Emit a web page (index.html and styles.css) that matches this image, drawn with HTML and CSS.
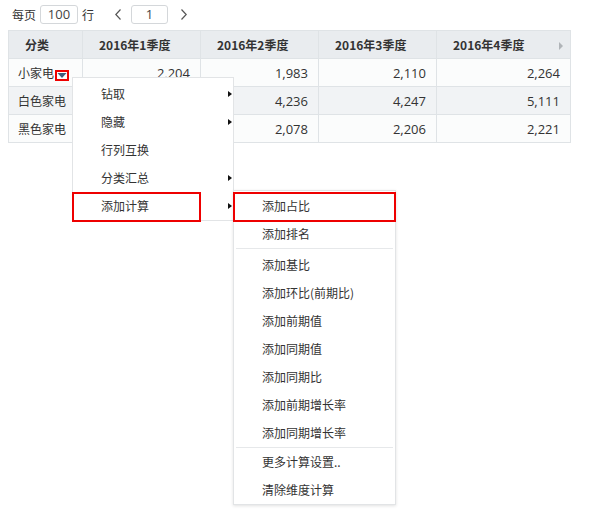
FILE: index.html
```html
<!DOCTYPE html>
<html lang="zh">
<head>
<meta charset="utf-8">
<link rel="stylesheet" href="styles.css">
</head>
<body>
<div class="page">
  <div class="toolbar">
    <span class="lbl">每页</span>
    <span class="box box-size">100</span>
    <span class="lbl">行</span>
    <span class="chev chev-prev"><svg width="6" height="11" viewBox="0 0 6 11"><path d="M5.5 0.5 L0.8 5.5 L5.5 10.5" fill="none" stroke="#555" stroke-width="1.2"/></svg></span>
    <span class="box box-page">1</span>
    <span class="chev chev-next"><svg width="6" height="11" viewBox="0 0 6 11"><path d="M0.5 0.5 L5.2 5.5 L0.5 10.5" fill="none" stroke="#555" stroke-width="1.2"/></svg></span>
  </div>

  <table class="grid">
    <colgroup>
      <col class="c1"><col class="c2"><col class="c2"><col class="c2"><col class="c5">
    </colgroup>
    <thead>
      <tr>
        <th>分类</th>
        <th>2016年1季度</th>
        <th>2016年2季度</th>
        <th>2016年3季度</th>
        <th class="last">2016年4季度<span class="sort"></span></th>
      </tr>
    </thead>
    <tbody>
      <tr class="odd">
        <td class="cat">小家电<span class="dd"><svg width="10" height="7" viewBox="0 0 10 7"><path d="M0.5 1 H9.5 L5 6 Z" fill="#3f5b7c"/></svg></span></td>
        <td>2,204</td><td>1,983</td><td>2,110</td><td>2,264</td>
      </tr>
      <tr class="even">
        <td class="cat">白色家电</td>
        <td>4,236</td><td>4,236</td><td>4,247</td><td>5,111</td>
      </tr>
      <tr class="odd">
        <td class="cat">黑色家电</td>
        <td>2,078</td><td>2,078</td><td>2,206</td><td>2,221</td>
      </tr>
    </tbody>
  </table>

  <div class="menu menu-main">
    <div class="item sub">钻取</div>
    <div class="item sub">隐藏</div>
    <div class="item">行列互换</div>
    <div class="item sub">分类汇总</div>
    <div class="item sub">添加计算</div>
    <div class="mark mark-main"></div>
  </div>

  <div class="menu menu-sub">
    <div class="item">添加占比</div>
    <div class="item">添加排名</div>
    <div class="sep"></div>
    <div class="item">添加基比</div>
    <div class="item">添加环比(前期比)</div>
    <div class="item">添加前期值</div>
    <div class="item">添加同期值</div>
    <div class="item">添加同期比</div>
    <div class="item">添加前期增长率</div>
    <div class="item">添加同期增长率</div>
    <div class="sep sep2"></div>
    <div class="item">更多计算设置..</div>
    <div class="item">清除维度计算</div>
    <div class="mark mark-sub"></div>
  </div>
</div>
</body>
</html>
```

FILE: styles.css
```css
html, body {
  margin: 0;
  padding: 0;
  background: #ffffff;
}

body {
  font-family: "Open Sans", "Noto Sans CJK SC", sans-serif;
  font-size: 12px;
  color: #333333;
}

.page {
  position: relative;
  width: 590px;
  height: 514px;
}

.toolbar {
  display: flex;
  align-items: center;
  height: 19px;
  padding: 5px 0 0 12px;
}

.lbl {
  font-family: "Noto Sans CJK SC", sans-serif;
  line-height: 19px;
}

.box {
  box-sizing: border-box;
  height: 19px;
  border: 1px solid #d4d7da;
  border-radius: 3px;
  text-align: center;
  line-height: 17px;
  color: #444;
  font-size: 13px;
}

.box-size {
  width: 38px;
  margin: 0 4px 0 4px;
}

.box-page {
  width: 37px;
  margin: 0 13px 0 0;
}

.chev {
  display: flex;
  align-items: center;
}

.chev-prev {
  margin: 0 10px 0 21px;
}

.grid {
  margin: 6px 0 0 8px;
  border-collapse: collapse;
  table-layout: fixed;
  width: 562px;
}

.grid col.c1 { width: 74px; }
.grid col.c2 { width: 118px; }
.grid col.c5 { width: 134px; }

.grid th,
.grid td {
  height: 27px;
  padding: 0;
  border: 1px solid #dfe3e6;
  white-space: nowrap;
}

.grid th {
  background: #e9ecef;
  font-weight: bold;
  text-align: left;
  padding-left: 16px;
  font-family: "Noto Sans CJK SC", sans-serif;
  font-size: 12px;
  color: #333;
  position: relative;
}

.grid td {
  text-align: right;
  padding-right: 10px;
  font-size: 13px;
}

.grid td.cat {
  text-align: left;
  padding: 0 0 0 9px;
  font-family: "Noto Sans CJK SC", sans-serif;
  font-size: 12px;
}

.grid tr.odd td { background: #fbfcfc; }
.grid tr.even td { background: #f1f3f5; }

.sort {
  position: absolute;
  right: 7px;
  top: 11px;
  width: 0;
  height: 0;
  border-left: 4px solid #b0b4b8;
  border-top: 4px solid transparent;
  border-bottom: 4px solid transparent;
}

.dd {
  display: inline-flex;
  align-items: center;
  justify-content: center;
  box-sizing: border-box;
  width: 14px;
  height: 11px;
  border: 2px solid #ee0000;
  vertical-align: -1px;
  margin-left: 1px;
}

.dd svg { display: block; }

.menu {
  position: absolute;
  box-sizing: border-box;
  background: #ffffff;
  border: 1px solid #e2e4e6;
  font-family: "Noto Sans CJK SC", sans-serif;
  font-size: 12px;
  color: #333;
}

.menu-main {
  left: 72px;
  top: 77px;
  width: 162px;
  padding-top: 2px;
}

.menu-sub {
  left: 233px;
  top: 190px;
  width: 163px;
  padding: 1px 0 0;
  box-shadow: 0 1px 3px rgba(0, 0, 0, 0.12);
}

.item {
  position: relative;
  height: 28px;
  line-height: 28px;
  padding-left: 28px;
}

.item.sub::after {
  content: "";
  position: absolute;
  right: 1px;
  top: 11px;
  width: 0;
  height: 0;
  border-left: 4px solid #111;
  border-top: 3px solid transparent;
  border-bottom: 3px solid transparent;
}

.sep {
  height: 1px;
  background: #e6e8ea;
  margin: 0 2px 2px;
}

.sep.sep2 {
  margin: 0 2px 0;
}

.mark {
  position: absolute;
  box-sizing: border-box;
  border: 2px solid #ee0000;
  height: 30px;
  pointer-events: none;
}

.mark-main {
  left: -1px;
  top: 114px;
  width: 129px;
}

.mark-sub {
  left: -1px;
  top: 1px;
  width: 163px;
}
```
